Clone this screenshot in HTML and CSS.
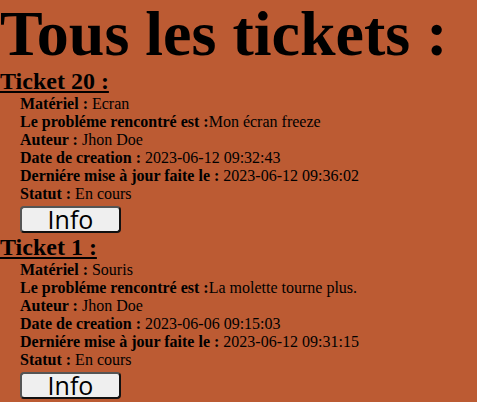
FILE: index.html
```html
<!DOCTYPE html>
<html lang="fr">
<head>
<meta charset="utf-8">
<title>Tickets</title>
<link rel="stylesheet" href="styles.css">
</head>
<body>
<h1 class="title">Tous les tickets :</h1>
<section class="ticket">
  <h2 class="ticket-title">Ticket 20 :</h2>
  <div class="details">
    <div class="row"><b>Matériel :</b> Ecran</div>
    <div class="row"><b>Le probléme rencontré est :</b>Mon écran freeze</div>
    <div class="row"><b>Auteur :</b> Jhon Doe</div>
    <div class="row"><b>Date de creation :</b> 2023-06-12 09:32:43</div>
    <div class="row"><b>Derniére mise à jour faite le :</b> 2023-06-12 09:36:02</div>
    <div class="row"><b>Statut :</b> En cours</div>
    <button class="info">Info</button>
  </div>
</section>
<section class="ticket">
  <h2 class="ticket-title">Ticket 1 :</h2>
  <div class="details">
    <div class="row"><b>Matériel :</b> Souris</div>
    <div class="row"><b>Le probléme rencontré est :</b>La molette tourne plus.</div>
    <div class="row"><b>Auteur :</b> Jhon Doe</div>
    <div class="row"><b>Date de creation :</b> 2023-06-06 09:15:03</div>
    <div class="row"><b>Derniére mise à jour faite le :</b> 2023-06-12 09:31:15</div>
    <div class="row"><b>Statut :</b> En cours</div>
    <button class="info">Info</button>
  </div>
</section>
</body>
</html>
```
FILE: styles.css
```css
html, body {
  margin: 0;
  padding: 0;
  background: #bc5b33;
  color: #000;
  font-family: "Liberation Serif", "Times New Roman", serif;
  font-size: 16px;
}
.title {
  font-size: 64px;
  font-weight: bold;
  margin: 0;
  line-height: 68px;
  white-space: nowrap;
}
.ticket-title {
  margin: 0;
  font-size: 24px;
  font-weight: bold;
  text-decoration: underline;
  line-height: 27px;
}
.details {
  padding-left: 20px;
}
.row {
  line-height: 18px;
}
.info {
  display: block;
  box-sizing: border-box;
  width: 101px;
  height: 27px;
  margin: 3px 0 1px 0;
  padding: 0;
  font-family: "Open Sans", "Liberation Sans", Arial, sans-serif;
  font-size: 25px;
  line-height: 23px;
  background: #efefef;
  border: 2px solid #111;
  border-top-color: #555;
  border-left-color: #555;
  border-radius: 4px;
  color: #000;
}
```
